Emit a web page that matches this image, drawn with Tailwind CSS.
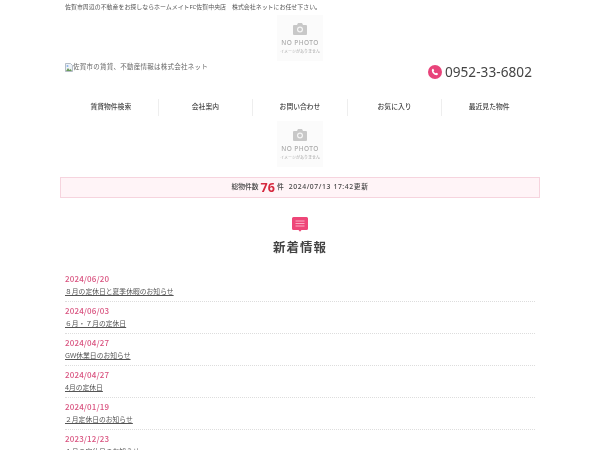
<!DOCTYPE html>
<html lang="ja">
<head>
<meta charset="utf-8">
<script src="https://cdn.jsdelivr.net/npm/@tailwindcss/browser@4"></script>
</head>
<body class="bg-white text-[#444] font-['Noto_Sans','Noto_Sans_CJK_JP',sans-serif] overflow-hidden">
<div class="w-[480px] mx-auto h-[450px] overflow-hidden blur-[0.35px]">
  <p class="h-[15px] pl-[5px] pt-[3px] text-[5.95px] leading-[8px] whitespace-nowrap text-[#555]">佐賀市周辺の不動産をお探しならホームメイトFC佐賀中央店　株式会社ネットにお任せ下さい。</p>

  <div class="w-[46px] h-[46px] mx-auto bg-[#fbfbfb] flex flex-col items-center pt-[8px]">
    <svg width="14" height="12" viewBox="0 0 14 12"><path d="M1 2h3l1-2h4l1 2h3a1 1 0 0 1 1 1v8a1 1 0 0 1-1 1H1a1 1 0 0 1-1-1V3a1 1 0 0 1 1-1z" fill="#c8c8c8"/><circle cx="7" cy="6.5" r="3" fill="#f5f5f5"/><circle cx="7" cy="6.5" r="1.8" fill="#c8c8c8"/></svg>
    <span class="text-[6.5px] leading-[7px] mt-[4px] tracking-[0.4px] text-[#aaa] font-medium whitespace-nowrap">NO PHOTO</span>
    <span class="text-[4px] leading-[5px] mt-[3px] text-[#aaa] whitespace-nowrap">イメージがありません</span>
  </div>

  <div class="flex justify-between h-[36px]">
    <div class="pl-[5px] pt-[1px] flex items-start h-[16px]">
      <svg width="8" height="9" viewBox="0 0 8 9" class="mt-[1px]"><path d="M0.5 0.5h5l2 2v6h-7z" fill="#eef2f7" stroke="#9aa5b1" stroke-width="0.7"/><path d="M1 8l2-3 1.500 2 1-1 1.500 2z" fill="#6a9a5b"/><circle cx="2.500" cy="3" r="1" fill="#8ab4e8"/></svg>
      <span class="text-[6.5px] leading-[10px] tracking-[0.25px] text-[#666] whitespace-nowrap">佐賀市の賃貸、不動産情報は株式会社ネット</span>
    </div>
    <div class="flex items-center h-[22px] pr-[8px] gap-[3px]">
      <span class="w-[14px] h-[14px] rounded-full bg-[#e8437a] flex items-center justify-center">
        <svg width="8" height="8" viewBox="0 0 24 24" fill="#fff"><path d="M6.600 2.500l3 4.500-2 2.500c1 2.500 4 5.500 6.500 6.500l2.500-2 4.500 3c0 2-2 4.500-4.500 4.500C9.500 21.500 2.500 14.500 2.500 7 2.500 4.500 4.600 2.500 6.600 2.500z"/></svg>
      </span>
      <span class="text-[13.6px] leading-[22px] tracking-[0.05px] text-[#444]">0952-33-6802</span>
    </div>
  </div>

  <nav class="flex h-[17px] mt-[2px] pl-[4px] pr-[4px] text-[6.8px] font-medium text-[#444]">
    <span class="flex-1 border-r border-[#eee] flex items-center justify-center whitespace-nowrap">賃貸物件検索</span>
    <span class="flex-1 border-r border-[#eee] flex items-center justify-center whitespace-nowrap">会社案内</span>
    <span class="flex-1 border-r border-[#eee] flex items-center justify-center whitespace-nowrap">お問い合わせ</span>
    <span class="flex-1 border-r border-[#eee] flex items-center justify-center whitespace-nowrap">お気に入り</span>
    <span class="flex-1 flex items-center justify-center whitespace-nowrap">最近見た物件</span>
  </nav>

  <div class="w-[46px] h-[46px] mx-auto mt-[5px] bg-[#fbfbfb] flex flex-col items-center pt-[8px]">
    <svg width="14" height="12" viewBox="0 0 14 12"><path d="M1 2h3l1-2h4l1 2h3a1 1 0 0 1 1 1v8a1 1 0 0 1-1 1H1a1 1 0 0 1-1-1V3a1 1 0 0 1 1-1z" fill="#c8c8c8"/><circle cx="7" cy="6.5" r="3" fill="#f5f5f5"/><circle cx="7" cy="6.5" r="1.8" fill="#c8c8c8"/></svg>
    <span class="text-[6.5px] leading-[7px] mt-[4px] tracking-[0.4px] text-[#aaa] font-medium whitespace-nowrap">NO PHOTO</span>
    <span class="text-[4px] leading-[5px] mt-[3px] text-[#aaa] whitespace-nowrap">イメージがありません</span>
  </div>

  <div class="mt-[10px] h-[21px] border border-[#f6d4de] bg-[#fff4f7] flex items-center justify-center text-[6.8px] font-medium text-[#444] whitespace-nowrap">
    総物件数<span class="text-[12.5px] leading-[14px] font-bold text-[#d6293f] mx-[2px]">76</span>件<span class="ml-[5px] tracking-[0.6px]">2024/07/13 17:42更新</span>
  </div>

  <div class="flex flex-col items-center mt-[19px]">
    <svg width="16" height="15" viewBox="0 0 16 15"><path d="M1.500 0h13A1.500 1.500 0 0 1 16 1.500v10a1.500 1.500 0 0 1-1.500 1.500H9.500L8 14.800 6.500 13h-5A1.500 1.500 0 0 1 0 11.500v-10A1.500 1.500 0 0 1 1.500 0z" fill="#ee4678"/><path d="M3.500 4h9M3.500 6.500h9M3.500 9h9" stroke="#ffc4d6" stroke-width="0.8"/></svg>
    <h2 class="mt-[7px] text-[12.5px] leading-[18px] font-bold tracking-[1px] text-[#444]">新着情報</h2>
  </div>

  <ul class="mx-[5px] mt-[13px]">
    <li class="h-[32px] border-b border-dotted border-[#ddd] flex flex-col pt-[3px]"><span class="font-['Noto_Sans_CJK_JP'] text-[8px] leading-[12px] font-medium tracking-[0.15px] text-[#d9527f]">2024/06/20</span><a class="mt-[1px] text-[6.8px] leading-[12px] underline text-[#555]">８月の定休日と夏季休暇のお知らせ</a></li>
    <li class="h-[32px] border-b border-dotted border-[#ddd] flex flex-col pt-[3px]"><span class="font-['Noto_Sans_CJK_JP'] text-[8px] leading-[12px] font-medium tracking-[0.15px] text-[#d9527f]">2024/06/03</span><a class="mt-[1px] text-[6.8px] leading-[12px] underline text-[#555]">６月・７月の定休日</a></li>
    <li class="h-[32px] border-b border-dotted border-[#ddd] flex flex-col pt-[3px]"><span class="font-['Noto_Sans_CJK_JP'] text-[8px] leading-[12px] font-medium tracking-[0.15px] text-[#d9527f]">2024/04/27</span><a class="mt-[1px] text-[6.8px] leading-[12px] underline text-[#555]">GW休業日のお知らせ</a></li>
    <li class="h-[32px] border-b border-dotted border-[#ddd] flex flex-col pt-[3px]"><span class="font-['Noto_Sans_CJK_JP'] text-[8px] leading-[12px] font-medium tracking-[0.15px] text-[#d9527f]">2024/04/27</span><a class="mt-[1px] text-[6.8px] leading-[12px] underline text-[#555]">4月の定休日</a></li>
    <li class="h-[32px] border-b border-dotted border-[#ddd] flex flex-col pt-[3px]"><span class="font-['Noto_Sans_CJK_JP'] text-[8px] leading-[12px] font-medium tracking-[0.15px] text-[#d9527f]">2024/01/19</span><a class="mt-[1px] text-[6.8px] leading-[12px] underline text-[#555]">２月定休日のお知らせ</a></li>
    <li class="h-[32px] flex flex-col pt-[3px]"><span class="font-['Noto_Sans_CJK_JP'] text-[8px] leading-[12px] font-medium tracking-[0.15px] text-[#d9527f]">2023/12/23</span><a class="mt-[1px] text-[6.8px] leading-[12px] underline text-[#555]">１月の定休日のお知らせ</a></li>
  </ul>
</div>
</body>
</html>
